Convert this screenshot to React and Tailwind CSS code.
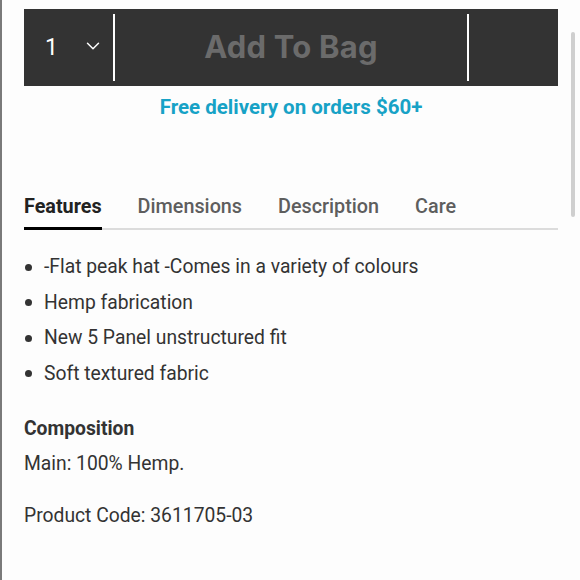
import { ChevronDown } from "lucide-react";

const features = [
  "-Flat peak hat -Comes in a variety of colours",
  "Hemp fabrication",
  "New 5 Panel unstructured fit",
  "Soft textured fabric",
];

const tabs = ["Features", "Dimensions", "Description", "Care"];

export default function App() {
  return (
    <div
      className="relative w-[580px] h-[580px] bg-[#fdfdfd] border-l-2 border-[#7a7a7a] overflow-hidden"
      style={{ fontFamily: "Roboto, 'Liberation Sans', sans-serif" }}
    >
      <div className="pl-[22px] pr-[22px] pt-[9px]">
        {/* add to bag bar */}
        <div className="flex items-center h-[77px] bg-[#333333]">
          <div className="flex items-center w-[89px] pl-[21px] gap-[24px]">
            <span className="text-white text-[23px] leading-none">1</span>
            <ChevronDown className="text-white w-[22px] h-[22px] -mt-[3px]" strokeWidth={1.6} />
          </div>
          <div className="w-[2px] h-[67px] bg-white" />
          <div
            className="flex-1 text-center text-[31px] font-bold text-[#6b6b6b] tracking-[0.2px]"
            style={{ fontFamily: "Inter, 'Open Sans', sans-serif" }}
          >
            Add To Bag
          </div>
          <div className="w-[2px] h-[67px] bg-white" />
          <div className="w-[89px]" />
        </div>

        <p className="mt-[8px] text-center text-[20.5px] font-bold text-[#17a2c6] leading-[26px]">
          Free delivery on orders $60+
        </p>

        {/* tabs */}
        <div className="mt-[74px] flex border-b-2 border-[#dcdcdc]">
          {tabs.map((t, i) => (
            <div
              key={t}
              className={
                i === 0
                  ? "mr-[36px] pb-[5px] text-[19.8px] font-bold text-[#222] border-b-[3px] border-black -mb-[2px] leading-[26px]"
                  : "mr-[36px] pb-[8px] text-[19.8px] font-medium text-[#5e5e5e] leading-[26px]"
              }
            >
              {t}
            </div>
          ))}
        </div>

        {/* features list */}
        <ul className="mt-[24px] flex flex-col gap-[9.5px] text-[19.3px] text-[#333] leading-[26px]">
          {features.map((f) => (
            <li key={f} className="flex items-center">
              <span className="w-[7px] h-[7px] rounded-full bg-[#333] ml-[1px] mr-[12px]" />
              {f}
            </li>
          ))}
        </ul>

        <h3 className="mt-[29px] text-[19.3px] font-bold text-[#333] leading-[26px]">Composition</h3>
        <p className="mt-[9px] text-[19.3px] text-[#333] leading-[26px]">Main: 100% Hemp.</p>
        <p className="mt-[26px] text-[19.3px] text-[#333] leading-[26px]">Product Code: 3611705-03</p>
      </div>

      {/* scrollbar */}
      <div className="absolute right-[5px] top-[32px] w-[4px] h-[185px] rounded-full bg-[#cfcfcf]" />
    </div>
  );
}
